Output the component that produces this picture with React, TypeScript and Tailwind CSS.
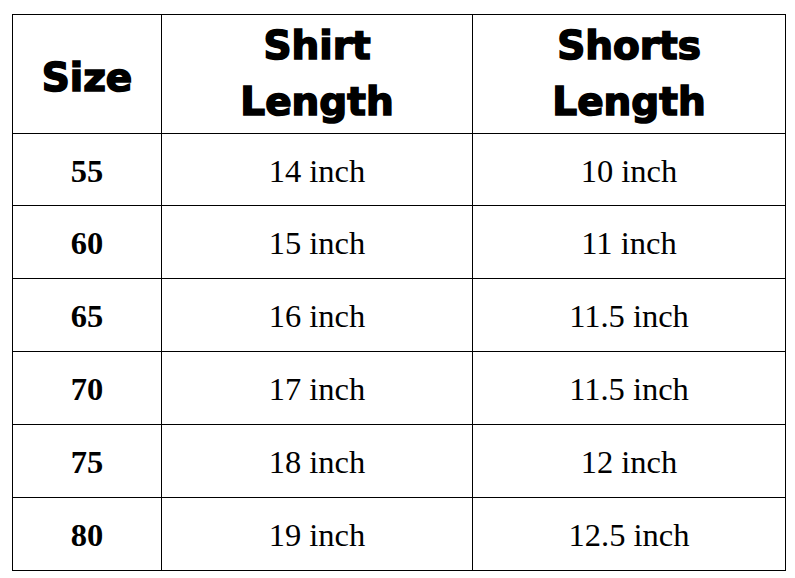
const rows: [string, string, string][] = [
  ["55", "14 inch", "10 inch"],
  ["60", "15 inch", "11 inch"],
  ["65", "16 inch", "11.5 inch"],
  ["70", "17 inch", "11.5 inch"],
  ["75", "18 inch", "12 inch"],
  ["80", "19 inch", "12.5 inch"],
];

const head =
  "flex items-center justify-center border-r border-b border-black text-center font-['DejaVu_Sans',sans-serif] text-[39px] font-bold leading-[56px] [-webkit-text-stroke:1.6px_black]";
const cell =
  "flex items-center justify-center border-r border-b border-black pt-[3px] font-['Liberation_Serif',serif] text-[32.5px]";

export default function App() {
  return (
    <div className="h-[578px] w-[795px] bg-white pl-[12px] pt-[14px] text-black">
      <div className="grid w-fit grid-cols-[149px_311px_313px] grid-rows-[119px_72px_73px_73px_73px_73px_73px] border-l border-t border-black">
        <div className={head + " pt-[7px]"}>Size</div>
        <div className={head}>
          Shirt
          <br />
          Length
        </div>
        <div className={head}>
          Shorts
          <br />
          Length
        </div>
        {rows.map(([size, shirt, shorts]) => (
          <div key={size} className="contents">
            <div className={cell + " font-bold"}>{size}</div>
            <div className={cell}>{shirt}</div>
            <div className={cell}>{shorts}</div>
          </div>
        ))}
      </div>
    </div>
  );
}
